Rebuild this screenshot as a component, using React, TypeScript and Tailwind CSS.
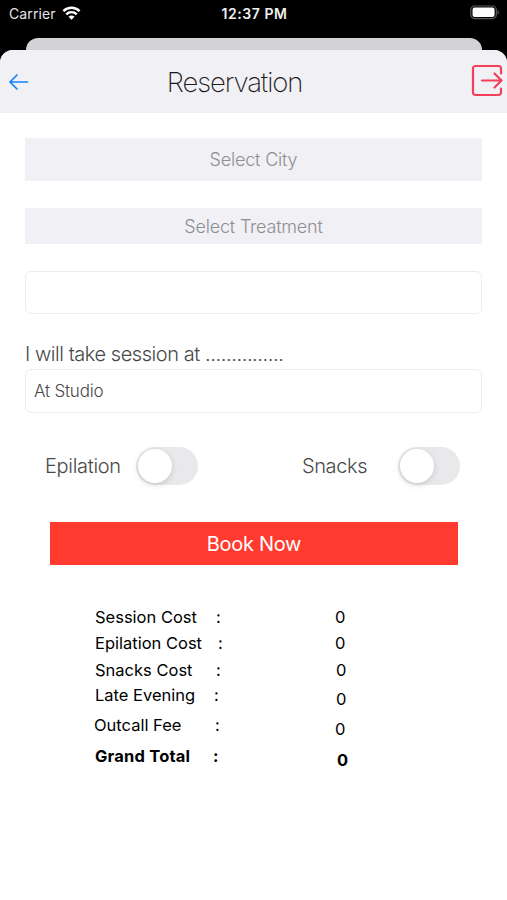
import { useState } from "react";

const costRows = [
  { label: "Session Cost", row: "", text: "w-[121px]" },
  { label: "Epilation Cost", row: "mt-[6px]", text: "w-[123px]" },
  { label: "Snacks Cost", row: "mt-[7px]", text: "w-[121px]" },
  { label: "Late Evening", row: "mt-[5px]", text: "w-[119px]" },
  { label: "Outcall Fee", row: "mt-[10px] -ml-px", text: "w-[121px]" },
  { label: "Grand Total", row: "mt-[11px] font-bold", text: "w-[118px] tracking-[0.2px]" },
];

const costValues = [
  { value: 0, row: "" },
  { value: 0, row: "mt-[6px]" },
  { value: 0, row: "mt-[7px] ml-px" },
  { value: 0, row: "mt-[9px] ml-px" },
  { value: 0, row: "mt-[10px]" },
  { value: 0, row: "mt-[11px] ml-[2px] font-bold" },
];

const StatusBar = () => (
  <div className="flex h-[38px] items-start justify-between pt-[5px] pr-[7px] pl-[9px] text-white">
    <div className="flex w-[160px] items-center gap-[6px]">
      <span className="text-[14px] leading-[18px] tracking-[0.1px] text-[#e4e4e4]">Carrier</span>
      <svg width="19" height="14" viewBox="0 0 18 14" fill="none" stroke="currentColor" strokeWidth="2.4" className="-mt-[2px]">
        <path d="M0.9 5.1a11.6 11.6 0 0 1 16.2 0" />
        <path d="M3.8 8.3a7.4 7.4 0 0 1 10.4 0" />
        <path d="M9 13.8 6 10.8a4.2 4.2 0 0 1 6 0Z" fill="currentColor" stroke="none" />
      </svg>
    </div>
    <span className="text-[14px] leading-[18px] font-semibold tracking-[0.55px] text-[#f0f0f0]">12:37 PM</span>
    <div className="flex w-[160px] items-center justify-end">
      <svg width="30" height="15" viewBox="0 0 31 15" fill="none">
        <rect x="0.8" y="0.8" width="26.4" height="13" rx="4" stroke="#5c5c5c" strokeWidth="1.2" />
        <rect x="2.6" y="2.4" width="22.8" height="9.8" rx="2.2" fill="#fff" />
        <path d="M28.4 5.2a2.4 2.4 0 0 1 0 4.4Z" fill="#5c5c5c" />
      </svg>
    </div>
  </div>
);

const Header = () => (
  <div className="flex h-[63px] items-center justify-between rounded-t-[13px] bg-[#f1f0f5] pr-[3px] pl-[9px]">
    <button className="w-[40px] text-[#1382fb]">
      <svg width="20" height="18" viewBox="0 0 20 18" fill="none" stroke="currentColor" strokeWidth="1.7" strokeLinecap="round" strokeLinejoin="round">
        <path d="M18.5 9H1M8 2 1 9l7 7" />
      </svg>
    </button>
    <h1 className="mr-[44px] pt-[2px] text-[27.5px] font-extralight tracking-[-1.1px] text-[#1c1c1e]">Reservation</h1>
    <button className="flex w-[40px] justify-end pb-px text-[#f33f5a]">
      <svg width="33" height="34" viewBox="0 0 33 34" fill="none" stroke="currentColor" strokeWidth="2.2" strokeLinecap="round" strokeLinejoin="round">
        <path d="M30 9.500V4.500A2.500 2.500 0 0 0 27.500 2h-23A2.500 2.500 0 0 0 2 4.500v24A2.500 2.500 0 0 0 4.500 31h23a2.500 2.500 0 0 0 2.500-2.500V24.500" />
        <path d="M11 16.500h19.500M23.500 9.500l7 7-7 7" />
      </svg>
    </button>
  </div>
);

const Toggle = () => {
  const [on, setOn] = useState(false);

  return (
    <button
      role="switch"
      aria-checked={on}
      onClick={() => setOn(!on)}
      className={`flex h-[38px] w-[62px] items-center rounded-full px-[2px] ${on ? "justify-end bg-[#34c759]" : "bg-[#e9e9eb]"}`}
    >
      <span className="size-[34px] rounded-full bg-white shadow-[0_2px_6px_rgba(0,0,0,0.15)]" />
    </button>
  );
};

const App = () => {
  return (
    <div className="h-[900px] w-full overflow-hidden bg-black font-['Inter',sans-serif]">
      <StatusBar />
      <div className="mr-[25px] -mb-[13px] ml-[26px] h-[25px] rounded-t-[12px] bg-[#d3d3d5]" />
      <div className="relative h-[850px] rounded-t-[13px] bg-white">
        <Header />

        <div className="flex flex-col px-[25px] pt-[25px]">
          <button className="h-[43px] bg-[#f1f0f5] text-[18px] font-light tracking-[-0.2px] text-[#8e8e92]">
            Select City
          </button>
          <button className="mt-[27px] h-[36px] bg-[#f1f0f5] text-[18px] font-light tracking-[-0.2px] text-[#8e8e92]">
            Select Treatment
          </button>
          <input className="mt-[27px] h-[43px] rounded-[6px] border border-[#ececec] px-2 outline-none" />

          <p className="mt-[27px] h-[28px] text-[20px] leading-[27px] font-light tracking-[-0.45px] whitespace-nowrap text-[#484848]">
            I will take session at <span className="tracking-[-0.4px]">...............</span>
          </p>
          <div className="flex h-[44px] items-center rounded-[6px] border border-[#ececec] px-[8px] pt-[2px] text-[17px] font-light tracking-[-0.2px] text-[#484848]">
            At Studio
          </div>
        </div>

        <div className="mt-[34px] flex h-[38px] items-center pl-[45px] text-[20px] font-light text-[#484848]">
          <span className="w-[91px] tracking-[-0.3px]">Epilation</span>
          <Toggle />
          <span className="ml-[104px] w-[96px] tracking-[-0.4px]">Snacks</span>
          <Toggle />
        </div>

        <button className="mt-[37px] ml-[50px] block h-[43px] w-[408px] bg-[#ff3b30] pt-px text-[20px] tracking-[-0.3px] text-white">
          Book Now
        </button>

        <div className="mt-[42px] flex pl-[95px] text-[16.5px] leading-[20px] text-black">
          <div className="w-[240px]">
            {costRows.map(({ label, row, text }) => (
              <div key={label} className={`flex ${row}`}>
                <span className={text}>{label}</span>
                <span>:</span>
              </div>
            ))}
          </div>
          <div>
            {costValues.map(({ value, row }, i) => (
              <div key={i} className={row}>{value}</div>
            ))}
          </div>
        </div>
      </div>
    </div>
  );
};

export default App;
